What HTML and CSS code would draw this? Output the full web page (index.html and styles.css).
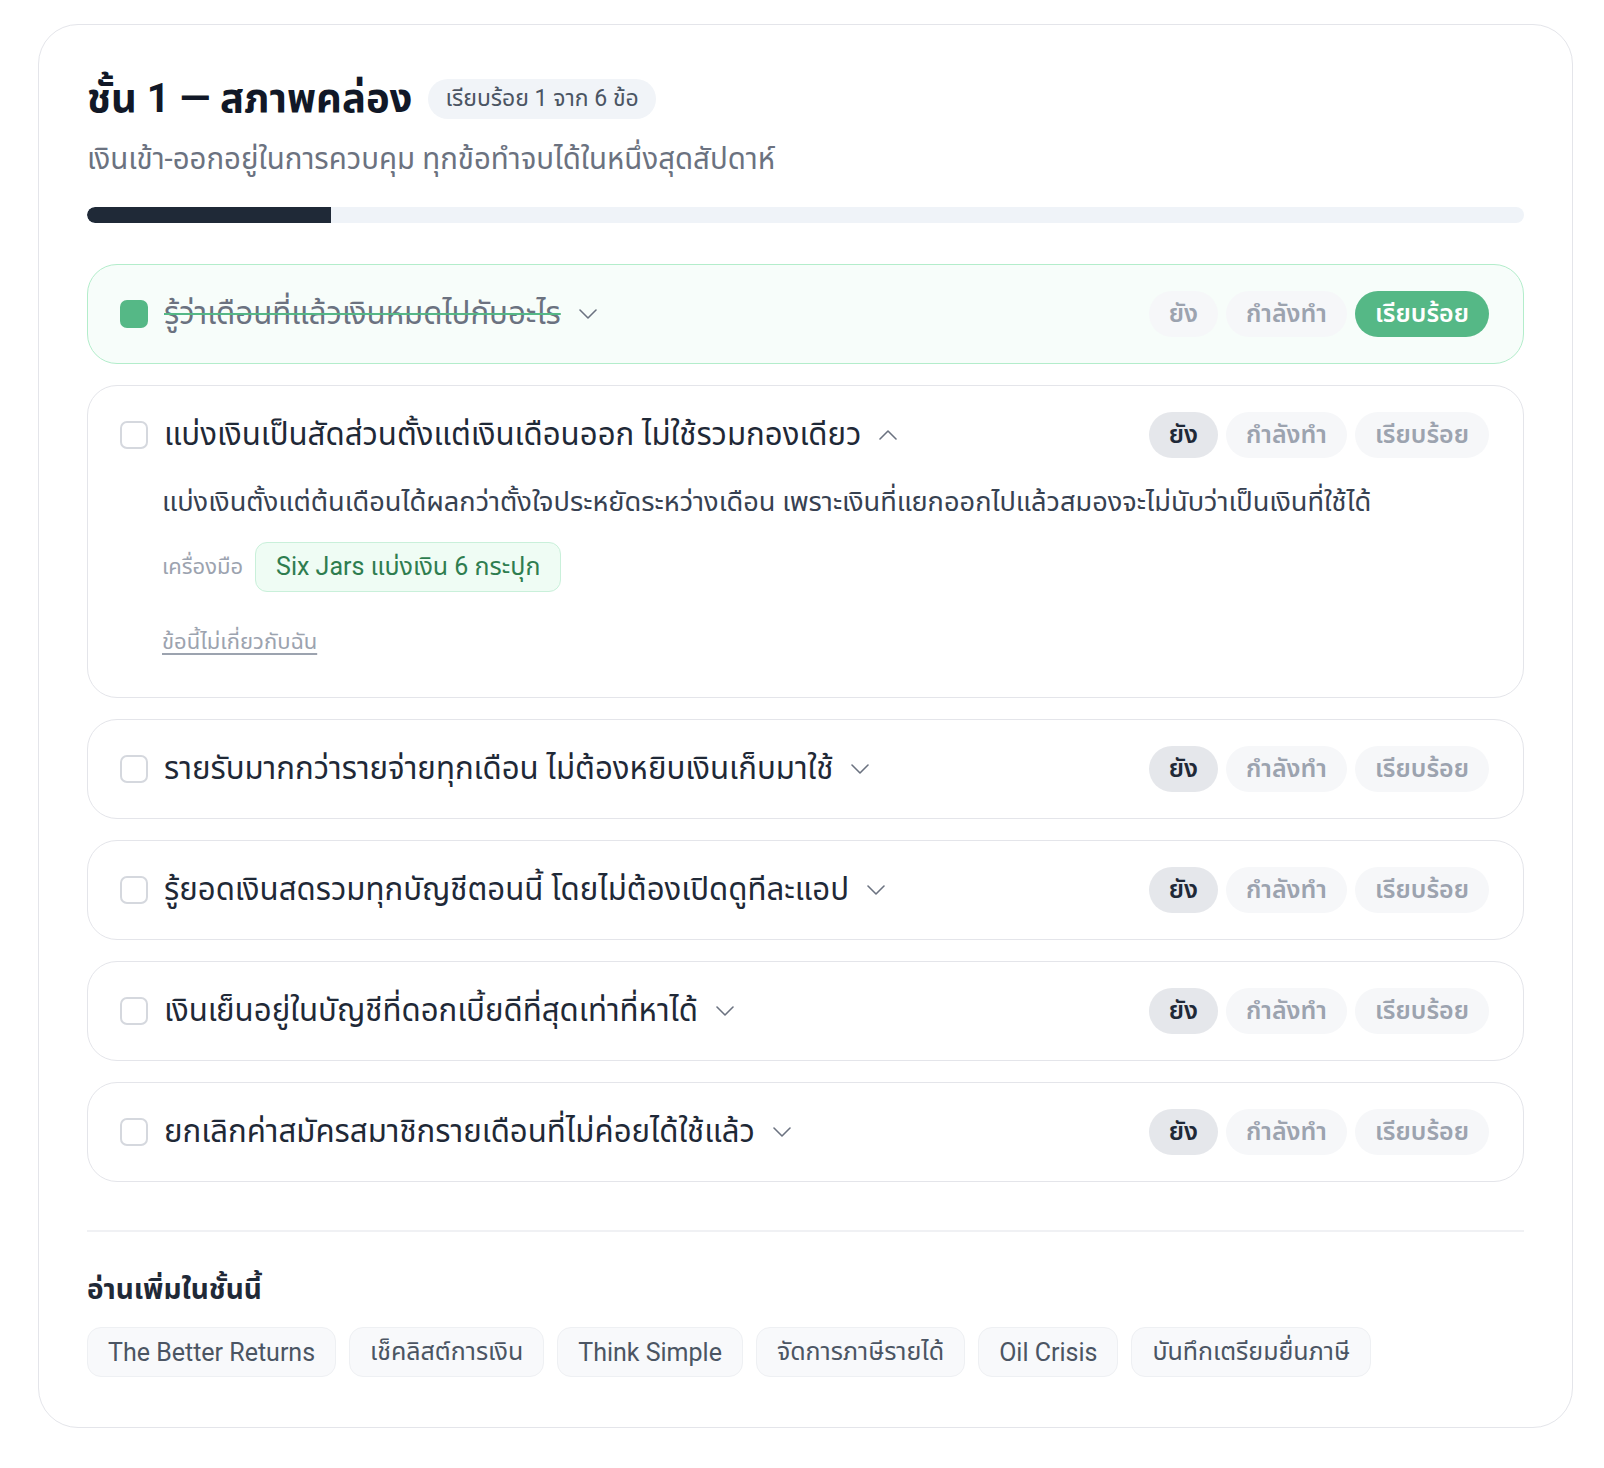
FILE: index.html
```html
<!DOCTYPE html>
<html lang="th">
<head>
<meta charset="utf-8">
<title>ชั้น 1 — สภาพคล่อง</title>
<link rel="stylesheet" href="styles.css">
</head>
<body>
<div class="page">
  <section class="card">
    <header class="card-head">
      <div class="title-line">
        <h1 class="title">ชั้น 1 — สภาพคล่อง</h1>
        <span class="badge">เรียบร้อย 1 จาก 6 ข้อ</span>
      </div>
      <p class="subtitle">เงินเข้า-ออกอยู่ในการควบคุม ทุกข้อทำจบได้ในหนึ่งสุดสัปดาห์</p>
      <div class="progress"><div class="progress-fill" style="width:17%"></div></div>
    </header>

    <ul class="items">
      <li class="item item--done">
        <div class="item-head">
          <span class="check check--on"></span>
          <span class="item-title">รู้ว่าเดือนที่แล้วเงินหมดไปกับอะไร</span>
          <svg class="chev" viewBox="0 0 18 10" width="18" height="10"><path d="M1 1l8 8 8-8"/></svg>
          <div class="status">
            <span class="pill">ยัง</span>
            <span class="pill">กำลังทำ</span>
            <span class="pill pill--done">เรียบร้อย</span>
          </div>
        </div>
      </li>

      <li class="item item--open">
        <div class="item-head">
          <span class="check"></span>
          <span class="item-title">แบ่งเงินเป็นสัดส่วนตั้งแต่เงินเดือนออก ไม่ใช้รวมกองเดียว</span>
          <svg class="chev" viewBox="0 0 18 10" width="18" height="10"><path d="M1 9l8-8 8 8"/></svg>
          <div class="status">
            <span class="pill pill--todo">ยัง</span>
            <span class="pill">กำลังทำ</span>
            <span class="pill">เรียบร้อย</span>
          </div>
        </div>
        <div class="item-body">
          <p class="desc">แบ่งเงินตั้งแต่ต้นเดือนได้ผลกว่าตั้งใจประหยัดระหว่างเดือน เพราะเงินที่แยกออกไปแล้วสมองจะไม่นับว่าเป็นเงินที่ใช้ได้</p>
          <div class="tools">
            <span class="tools-label">เครื่องมือ</span>
            <span class="tool">Six Jars แบ่งเงิน 6 กระปุก</span>
          </div>
          <a class="skip" href="#">ข้อนี้ไม่เกี่ยวกับฉัน</a>
        </div>
      </li>

      <li class="item">
        <div class="item-head">
          <span class="check"></span>
          <span class="item-title">รายรับมากกว่ารายจ่ายทุกเดือน ไม่ต้องหยิบเงินเก็บมาใช้</span>
          <svg class="chev" viewBox="0 0 18 10" width="18" height="10"><path d="M1 1l8 8 8-8"/></svg>
          <div class="status">
            <span class="pill pill--todo">ยัง</span>
            <span class="pill">กำลังทำ</span>
            <span class="pill">เรียบร้อย</span>
          </div>
        </div>
      </li>

      <li class="item">
        <div class="item-head">
          <span class="check"></span>
          <span class="item-title">รู้ยอดเงินสดรวมทุกบัญชีตอนนี้ โดยไม่ต้องเปิดดูทีละแอป</span>
          <svg class="chev" viewBox="0 0 18 10" width="18" height="10"><path d="M1 1l8 8 8-8"/></svg>
          <div class="status">
            <span class="pill pill--todo">ยัง</span>
            <span class="pill">กำลังทำ</span>
            <span class="pill">เรียบร้อย</span>
          </div>
        </div>
      </li>

      <li class="item">
        <div class="item-head">
          <span class="check"></span>
          <span class="item-title">เงินเย็นอยู่ในบัญชีที่ดอกเบี้ยดีที่สุดเท่าที่หาได้</span>
          <svg class="chev" viewBox="0 0 18 10" width="18" height="10"><path d="M1 1l8 8 8-8"/></svg>
          <div class="status">
            <span class="pill pill--todo">ยัง</span>
            <span class="pill">กำลังทำ</span>
            <span class="pill">เรียบร้อย</span>
          </div>
        </div>
      </li>

      <li class="item">
        <div class="item-head">
          <span class="check"></span>
          <span class="item-title">ยกเลิกค่าสมัครสมาชิกรายเดือนที่ไม่ค่อยได้ใช้แล้ว</span>
          <svg class="chev" viewBox="0 0 18 10" width="18" height="10"><path d="M1 1l8 8 8-8"/></svg>
          <div class="status">
            <span class="pill pill--todo">ยัง</span>
            <span class="pill">กำลังทำ</span>
            <span class="pill">เรียบร้อย</span>
          </div>
        </div>
      </li>
    </ul>

    <div class="more">
      <h2 class="more-title">อ่านเพิ่มในชั้นนี้</h2>
      <div class="chips">
        <a class="chip" href="#">The Better Returns</a>
        <a class="chip" href="#">เช็คลิสต์การเงิน</a>
        <a class="chip" href="#">Think Simple</a>
        <a class="chip" href="#">จัดการภาษีรายได้</a>
        <a class="chip" href="#">Oil Crisis</a>
        <a class="chip" href="#">บันทึกเตรียมยื่นภาษี</a>
      </div>
    </div>
  </section>
</div>
</body>
</html>
```

FILE: styles.css
```css
* { box-sizing: border-box; }

html, body {
  margin: 0;
  padding: 0;
  background: #ffffff;
}

body {
  font-family: "Roboto", "Noto Sans Thai", "Noto Sans", sans-serif;
  color: #1f2937;
}

.page {
  padding: 24px 31px 40px 38px;
}

.card {
  border: 1px solid #e4e5ea;
  border-radius: 40px;
  padding: 48px 48px 50px;
  background: #fff;
}

.title-line {
  display: flex;
  align-items: center;
  gap: 16px;
}

.title {
  margin: 0;
  font-size: 40px;
  font-weight: 700;
  line-height: 52px;
  color: #111827;
}

.badge {
  display: inline-flex;
  align-items: center;
  height: 40px;
  padding: 0 17px;
  border-radius: 20px;
  background: #f1f4f8;
  color: #4b5563;
  font-size: 23px;
}

.subtitle {
  margin: 14px 0 0;
  font-size: 29.4px;
  line-height: 40px;
  color: #6b7280;
}

.progress {
  margin-top: 28px;
  height: 16px;
  border-radius: 8px;
  background: #eff3f8;
  overflow: hidden;
}

.progress-fill {
  height: 100%;
  background: #1f2937;
  border-radius: 8px 0 0 8px;
}

.items {
  list-style: none;
  margin: 41px 0 0;
  padding: 0;
  display: flex;
  flex-direction: column;
  gap: 21px;
}

.item {
  border: 1.5px solid #e4e5ea;
  border-radius: 30px;
  padding: 24px 34px 24px 32px;
  background: #fff;
}

.item--done {
  border-color: #b3edcb;
  background: #f7fdfa;
}

.item-head {
  display: flex;
  align-items: center;
  min-height: 50px;
}

.check {
  flex: none;
  width: 28px;
  height: 28px;
  border: 2px solid #d5d8de;
  border-radius: 7px;
  background: #fff;
  margin-right: 16px;
}

.check--on {
  background: #55b886;
  border-color: #55b886;
}

.item-title {
  font-size: 31.2px;
  line-height: 44px;
  color: #1f2937;
}

.item--done .item-title {
  color: #6b7280;
  text-decoration: line-through;
  text-decoration-color: #55b886;
  text-decoration-thickness: 2px;
}

.chev {
  flex: none;
  margin-left: 18px;
  fill: none;
  stroke: #6b7280;
  stroke-width: 1.6;
  stroke-linecap: round;
  stroke-linejoin: round;
}

.status {
  margin-left: auto;
  display: flex;
  gap: 8px;
}

.pill {
  display: inline-flex;
  align-items: center;
  justify-content: center;
  height: 46px;
  padding: 0 20px;
  border-radius: 23px;
  background: #f6f7f9;
  color: #9ca3af;
  font-size: 25px;
  font-weight: 600;
}

.pill--todo {
  background: #e5e7eb;
  color: #1f2937;
}

.pill--done {
  background: #55b886;
  color: #ffffff;
}

.item-body {
  padding: 22px 0 16px 42px;
}

.desc {
  margin: 0;
  font-size: 27.2px;
  line-height: 40px;
  color: #374151;
}

.tools {
  margin-top: 20px;
  display: flex;
  align-items: center;
  gap: 12px;
}

.tools-label {
  font-size: 22px;
  color: #9ca3af;
}

.tool {
  display: inline-flex;
  align-items: center;
  height: 50px;
  padding: 0 20px;
  border: 1.5px solid #c9f0da;
  border-radius: 12px;
  background: #effcf4;
  color: #2e7d4f;
  font-size: 25px;
}

.skip {
  display: inline-block;
  margin-top: 35px;
  font-size: 22px;
  line-height: 30px;
  color: #9ca3af;
  text-decoration: underline;
  text-underline-offset: 4px;
}

.more {
  margin-top: 48px;
  border-top: 2px solid #f0f1f4;
  padding-top: 38px;
}

.more-title {
  margin: 0;
  font-size: 28px;
  font-weight: 700;
  line-height: 40px;
  color: #1f2937;
}

.chips {
  margin-top: 17px;
  display: flex;
  flex-wrap: wrap;
  gap: 13px;
}

.chip {
  display: inline-flex;
  align-items: center;
  height: 50px;
  padding: 0 20px;
  border: 1.5px solid #eef0f3;
  border-radius: 14px;
  background: #f8f9fb;
  color: #4b5563;
  font-size: 25px;
  text-decoration: none;
}
```
